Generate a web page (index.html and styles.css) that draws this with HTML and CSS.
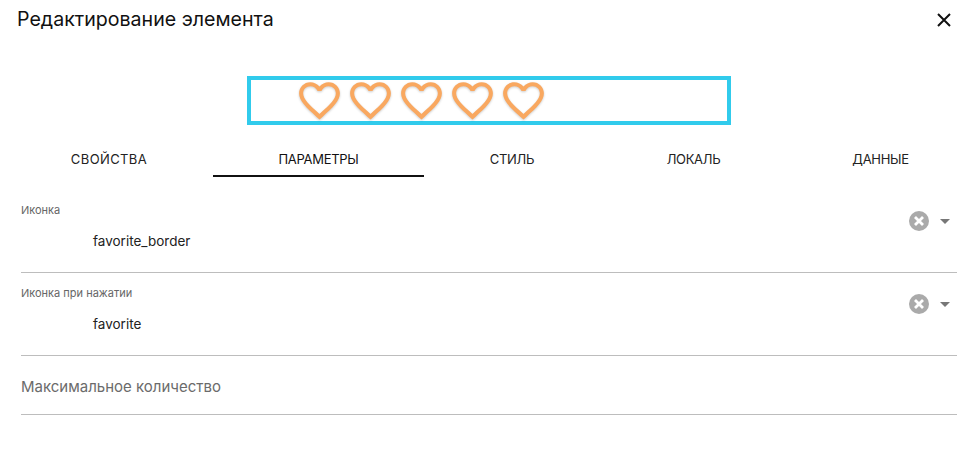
FILE: index.html
```html
<!DOCTYPE html>
<html lang="ru">
<head>
<meta charset="utf-8">
<title>Редактирование элемента</title>
<link rel="stylesheet" href="styles.css">
</head>
<body>
<svg class="defs" width="0" height="0" aria-hidden="true">
  <defs>
    <g id="heart"><path d="M16.5 3c-1.74 0-3.41.81-4.5 2.09C10.91 3.81 9.24 3 7.5 3 4.42 3 2 5.42 2 8.5c0 3.78 3.4 6.86 8.55 11.54L12 21.35l1.45-1.32C18.6 15.36 22 12.28 22 8.5 22 5.42 19.58 3 16.5 3zm-4.4 15.55l-.1.1-.1-.1C7.14 14.24 4 11.39 4 8.5 4 6.5 5.5 5 7.5 5c1.54 0 3.04.99 3.57 2.36h1.87C13.46 5.99 14.96 5 16.5 5c2 0 3.5 1.5 3.5 3.5 0 2.89-3.14 5.74-7.9 10.05z"/></g>
    <g id="clear"><circle cx="10" cy="10" r="10" fill="#aaa"/><path d="M6 6 L14 14 M14 6 L6 14" stroke="#fff" stroke-width="2.8" fill="none"/></g>
  </defs>
</svg>
<main class="dialog">
  <header class="head">
    <h1 class="title">Редактирование элемента</h1>
    <svg class="close" width="14" height="14" viewBox="0 0 14 14"><path d="M1 1 L13 13 M13 1 L1 13" stroke="#111" stroke-width="2" fill="none"/></svg>
  </header>
  <section class="preview">
    <div class="frame">
      <svg class="heart" width="49" height="49" viewBox="0 0 24 24"><use href="#heart"/></svg>
      <svg class="heart" width="49" height="49" viewBox="0 0 24 24"><use href="#heart"/></svg>
      <svg class="heart" width="49" height="49" viewBox="0 0 24 24"><use href="#heart"/></svg>
      <svg class="heart" width="49" height="49" viewBox="0 0 24 24"><use href="#heart"/></svg>
      <svg class="heart" width="49" height="49" viewBox="0 0 24 24"><use href="#heart"/></svg>
    </div>
  </section>
  <nav class="tabs">
    <div class="tab">СВОЙСТВА</div>
    <div class="tab tab-active">ПАРАМЕТРЫ</div>
    <div class="tab">СТИЛЬ</div>
    <div class="tab">ЛОКАЛЬ</div>
    <div class="tab">ДАННЫЕ</div>
  </nav>
  <form class="form">
    <div class="field field-select">
      <div class="label-small">Иконка</div>
      <div class="value">favorite_border</div>
      <div class="controls">
        <svg width="20" height="20" viewBox="0 0 20 20"><use href="#clear"/></svg>
        <svg class="caret" width="10" height="5" viewBox="0 0 10 5"><path d="M0 0 H10 L5 5 Z" fill="#777"/></svg>
      </div>
    </div>
    <div class="field field-select">
      <div class="label-small">Иконка при нажатии</div>
      <div class="value">favorite</div>
      <div class="controls">
        <svg width="20" height="20" viewBox="0 0 20 20"><use href="#clear"/></svg>
        <svg class="caret" width="10" height="5" viewBox="0 0 10 5"><path d="M0 0 H10 L5 5 Z" fill="#777"/></svg>
      </div>
    </div>
    <div class="field field-text">Максимальное количество</div>
  </form>
</main>
</body>
</html>
```
FILE: styles.css
```css
html, body {
  margin: 0;
  padding: 0;
  background: #fff;
}
body {
  width: 969px;
  height: 471px;
  overflow: hidden;
  font-family: "Inter", "Noto Sans", sans-serif;
  color: #111;
}
.defs {
  display: block;
  height: 0;
}
.dialog {
  display: flex;
  flex-direction: column;
}
.head {
  display: flex;
  justify-content: space-between;
  align-items: center;
  height: 37px;
  padding: 0 18px 0 17px;
}
.title {
  margin: 0;
  font-size: 19.6px;
  font-weight: 400;
}
.close {
  flex: none;
  margin-top: 2px;
}
.preview {
  display: flex;
  justify-content: center;
  padding: 39px 0 0 8px;
}
.frame {
  box-sizing: border-box;
  width: 484px;
  height: 49px;
  border: 4px solid #31cbec;
  display: flex;
  align-items: center;
  gap: 2px;
  padding-left: 44px;
}
.heart {
  flex: none;
  fill: #f9a860;
  filter: drop-shadow(0 1px 1px rgba(0, 0, 0, .2));
}
.tabs {
  display: flex;
  margin: 20px 0 0 5px;
  width: 969px;
}
.tab {
  box-sizing: border-box;
  height: 32px;
  padding: 6px 0 0;
  text-align: center;
  font-size: 13px;
  line-height: 16px;
  letter-spacing: -.3px;
  color: #222;
  border-bottom: 2px solid transparent;
}
.tab:nth-child(1) { width: 208px; letter-spacing: .4px; }
.tab:nth-child(2) { width: 211px; }
.tab:nth-child(3) { width: 176px; }
.tab:nth-child(4) { width: 187px; }
.tab:nth-child(5) { width: 187px; }
.tab-active {
  color: #111;
  border-bottom-color: #111;
}
.form {
  display: flex;
  flex-direction: column;
  margin: 0 12px 0 21px;
  padding-top: 13px;
}
.field {
  position: relative;
  box-sizing: border-box;
  border-bottom: 1px solid #bdbdbd;
}
.field-select {
  height: 83px;
  padding-top: 14px;
}
.label-small {
  font-size: 11px;
  line-height: 12px;
  color: #666;
}
.value {
  margin: 16px 0 0 72px;
  font-size: 13.5px;
  line-height: 18px;
  color: #222;
}
.controls {
  position: absolute;
  top: 21px;
  right: 7px;
  display: flex;
  align-items: center;
  gap: 11px;
}
.field-text {
  height: 59px;
  padding-top: 21px;
  font-size: 15px;
  line-height: 20px;
  color: #6b6b6b;
}
```
